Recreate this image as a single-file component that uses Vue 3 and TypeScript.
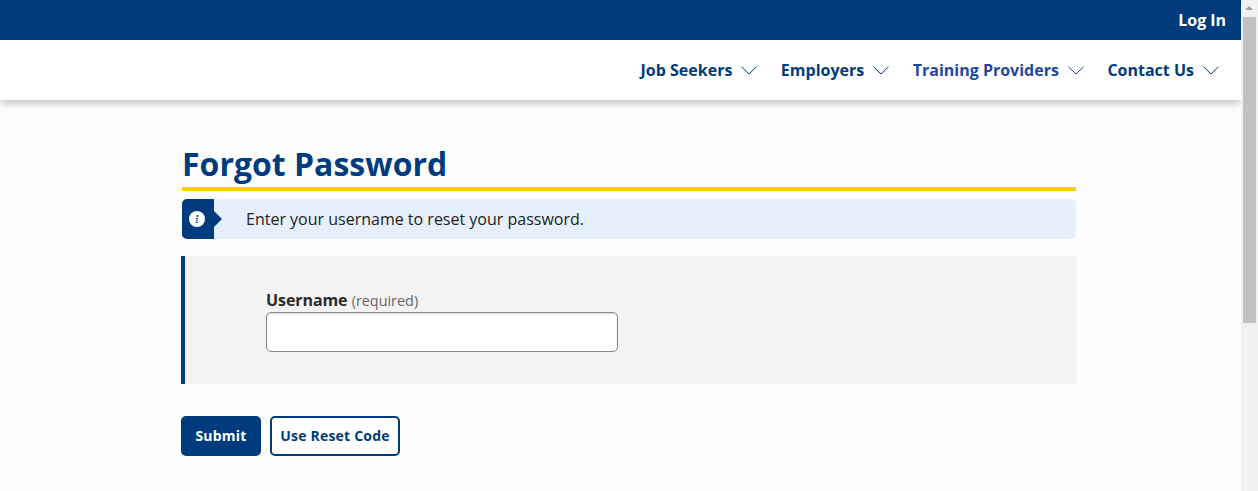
<script setup lang="ts">
const navItems: string[] = ['Job Seekers', 'Employers', 'Training Providers', 'Contact Us'];
</script>

<template>
  <div class="window">
    <div class="page">
      <div class="topbar"><a class="login">Log In</a></div>
      <nav class="nav">
        <a v-for="item in navItems" :key="item" class="nav-item" :class="{ active: item === 'Training Providers' }">
          <span>{{ item }}</span>
          <svg class="chev" width="16" height="9" viewBox="0 0 16 9" fill="none" aria-hidden="true">
            <path d="M0.5 0.8 L8 8 L15.5 0.8" stroke="currentColor" stroke-width="1" />
          </svg>
        </a>
      </nav>
      <main class="main">
        <h1 class="title">Forgot Password</h1>
        <div class="alert">
          <div class="alert-icon">
            <svg width="16" height="16" viewBox="0 0 16 16" aria-hidden="true">
              <circle cx="8" cy="8" r="8" fill="#fff" />
              <circle cx="8.5" cy="5" r="1" fill="#003c7d" />
              <path d="M6.9 7.1h2l-.8 3.9h.8v.8H6.6v-.8h.6l.6-3.1h-.9z" fill="#003c7d" />
            </svg>
          </div>
          <p class="alert-text">Enter your username to reset your password.</p>
        </div>
        <form class="panel" @submit.prevent>
          <label class="label" for="username"><b>Username</b> <span class="req">(required)</span></label>
          <input id="username" class="input" type="text" />
        </form>
        <div class="actions">
          <button class="btn primary" type="button">Submit</button>
          <button class="btn outline" type="button">Use Reset Code</button>
        </div>
      </main>
    </div>
    <div class="scrollbar" aria-hidden="true">
      <div class="arrow"></div>
      <div class="thumb"></div>
    </div>
  </div>
</template>

<style>
html, body { margin: 0; overflow: hidden; }
</style>

<style scoped>
.window {
  display: flex;
  width: 1258px;
  height: 491px;
  overflow: hidden;
  background: #fefefe;
  font-family: "Open Sans", "Liberation Sans", sans-serif;
}
.page { width: 1241px; flex: none; }
.topbar {
  height: 40px;
  background: #003c7d;
  display: flex;
  justify-content: flex-end;
  align-items: center;
  padding-right: 15px;
  box-sizing: border-box;
}
.login { color: #fff; font-size: 16px; font-weight: 700; letter-spacing: -0.05px; }
.nav {
  height: 60px;
  background: #fff;
  display: flex;
  justify-content: flex-end;
  align-items: center;
  gap: 23.5px;
  padding-right: 22px;
  box-sizing: border-box;
  box-shadow: 0 3px 8px rgba(0, 0, 0, 0.25);
  position: relative;
}
.nav-item {
  display: flex;
  align-items: center;
  gap: 9px;
  color: #003c7d;
  font-size: 16px;
  font-weight: 700;
}
.nav-item.active { color: #1f479f; }
.chev { margin-top: 1px; }
.main { padding: 44px 0 0 181px; width: 896px; }
.title {
  margin: 0 1px;
  height: 47px;
  box-sizing: border-box;
  border-bottom: 4px solid #ffcc00;
  color: #003c7d;
  font-size: 32px;
  line-height: 40px;
  font-weight: 700;
}
.alert {
  margin: 8px 1px 0;
  height: 40px;
  display: flex;
  align-items: center;
  background: #e6f0fc;
  border-radius: 5px;
}
.alert-icon {
  position: relative;
  width: 32px;
  height: 40px;
  flex: none;
  box-sizing: border-box;
  padding-right: 2px;
  display: flex;
  align-items: center;
  justify-content: center;
  background: #003c7d;
  border-radius: 5px 0 0 5px;
}
.alert-icon::after {
  content: "";
  position: absolute;
  left: 32px;
  top: 12px;
  border-left: 8px solid #003c7d;
  border-top: 8px solid transparent;
  border-bottom: 8px solid transparent;
}
.alert-text { margin: 0 0 0 32px; color: #212121; font-size: 16px; }
.panel {
  margin-top: 17px;
  height: 128px;
  box-sizing: border-box;
  background: #f3f3f3;
  border-left: 4px solid #003c7d;
  padding: 33px 0 0 81px;
  display: flex;
  flex-direction: column;
  align-items: flex-start;
}
.label { color: #2b2b2b; font-size: 16px; line-height: 23px; }
.label b { font-weight: 700; letter-spacing: -0.08px; }
.req { color: #666; font-size: 14.4px; }
.input {
  width: 352px;
  height: 40px;
  box-sizing: border-box;
  background: #fff;
  border: 1px solid #888;
  border-radius: 5px;
  box-shadow: inset 0 1px 2px rgba(0, 0, 0, 0.15);
}
.actions { margin-top: 32px; display: flex; gap: 9px; }
.btn {
  height: 40px;
  box-sizing: border-box;
  border-radius: 5px;
  font-family: inherit;
  font-size: 14px;
  font-weight: 700;
  letter-spacing: 0.2px;
  padding: 0 0 2px;
}
.primary { width: 80px; background: #003c7d; color: #fff; border: 2px solid #003c7d; }
.outline { width: 130px; background: #fff; color: #003c7d; border: 2px solid #003c7d; }
.scrollbar { width: 17px; height: 491px; flex: none; background: #f1f1f1; position: relative; }
.arrow {
  position: absolute;
  left: 4px;
  top: 6px;
  border-left: 4px solid transparent;
  border-right: 4px solid transparent;
  border-bottom: 4px solid #a3a3a3;
}
.thumb { position: absolute; left: 2px; top: 17px; width: 13px; height: 306px; background: #c1c1c1; }
</style>
